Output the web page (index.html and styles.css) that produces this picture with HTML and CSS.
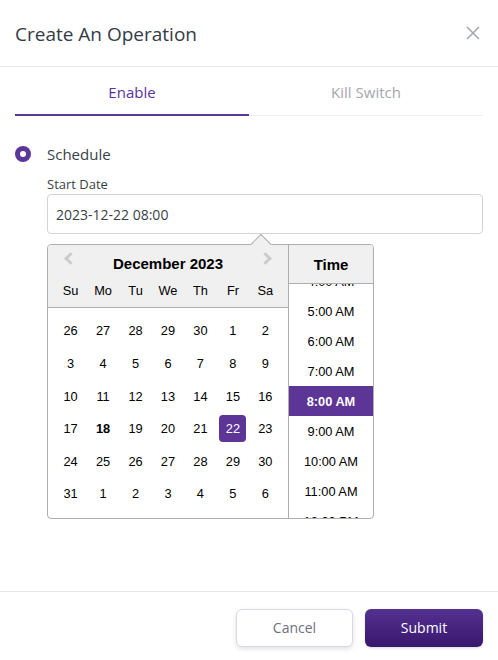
FILE: index.html
```html
<!DOCTYPE html>
<html lang="en">
<head>
<meta charset="utf-8">
<title>Create An Operation</title>
<link rel="stylesheet" href="styles.css">
</head>
<body>
<div class="modal">
  <header class="modal-header">
    <h2 class="modal-title">Create An Operation</h2>
    <button class="close" aria-label="Close">
      <svg width="14" height="14" viewBox="0 0 14 14"><path d="M1 1 L13 13 M13 1 L1 13" stroke="#a3a5b0" stroke-width="1.5" fill="none"/></svg>
    </button>
  </header>
  <main class="modal-body">
    <div class="tabs">
      <div class="tab active">Enable</div>
      <div class="tab">Kill Switch</div>
    </div>
    <div class="option">
      <span class="radio"></span>
      <span class="option-label">Schedule</span>
    </div>
    <div class="field">
      <label class="field-label">Start Date</label>
      <div class="input">2023-12-22 08:00</div>
      <div class="popper">
        <div class="arrow"></div>
        <div class="datepicker">
          <div class="month-box">
            <div class="dp-header">
              <span class="nav prev"></span>
              <div class="current-month">December 2023</div>
              <span class="nav next"></span>
              <div class="day-names">
                <span>Su</span><span>Mo</span><span>Tu</span><span>We</span><span>Th</span><span>Fr</span><span>Sa</span>
              </div>
            </div>
            <div class="month">
              <div class="week"><span>26</span><span>27</span><span>28</span><span>29</span><span>30</span><span>1</span><span>2</span></div>
              <div class="week"><span>3</span><span>4</span><span>5</span><span>6</span><span>7</span><span>8</span><span>9</span></div>
              <div class="week"><span>10</span><span>11</span><span>12</span><span>13</span><span>14</span><span>15</span><span>16</span></div>
              <div class="week"><span>17</span><span class="today">18</span><span>19</span><span>20</span><span>21</span><span class="selected">22</span><span>23</span></div>
              <div class="week"><span>24</span><span>25</span><span>26</span><span>27</span><span>28</span><span>29</span><span>30</span></div>
              <div class="week"><span>31</span><span>1</span><span>2</span><span>3</span><span>4</span><span>5</span><span>6</span></div>
            </div>
          </div>
          <div class="time-box">
            <div class="time-header">Time</div>
            <div class="time-list-wrap">
              <ul class="time-list">
                <li>4:00 AM</li>
                <li>5:00 AM</li>
                <li>6:00 AM</li>
                <li>7:00 AM</li>
                <li class="selected">8:00 AM</li>
                <li>9:00 AM</li>
                <li>10:00 AM</li>
                <li>11:00 AM</li>
                <li>12:00 PM</li>
              </ul>
            </div>
          </div>
        </div>
      </div>
    </div>
  </main>
  <footer class="modal-footer">
    <button class="btn btn-cancel">Cancel</button>
    <button class="btn btn-submit">Submit</button>
  </footer>
</div>
</body>
</html>
```
FILE: styles.css
```css
* { box-sizing: border-box; }
html, body { margin: 0; padding: 0; background: #fff; }
body { font-family: "Open Sans", "Noto Sans", sans-serif; color: #333; }

.modal {
  width: 498px;
  height: 660px;
  display: flex;
  flex-direction: column;
}

.modal-header {
  height: 67px;
  flex: none;
  display: flex;
  align-items: center;
  justify-content: space-between;
  padding: 0 18px 0 15px;
  border-bottom: 1px solid #e6e6e9;
}
.modal-title {
  margin: 0;
  font-size: 19px;
  font-weight: 400;
  color: #343b46;
  padding-top: 1px;
}
.close {
  border: 0;
  background: none;
  padding: 0;
  width: 14px;
  height: 14px;
  display: flex;
  margin-top: -1px;
}

.modal-body {
  flex: 1;
  padding: 0 15px;
}

.tabs {
  display: flex;
  border-bottom: 1px solid #efeff2;
}
.tab {
  flex: 1;
  height: 49px;
  display: flex;
  align-items: center;
  justify-content: center;
  font-size: 15px;
  color: #a6a6b0;
  border-bottom: 2px solid transparent;
  margin-bottom: -1px;
  padding-top: 2px;
}
.tab.active {
  color: #5a33a0;
  border-bottom-color: #5b3497;
}

.option {
  display: flex;
  align-items: center;
  gap: 16px;
  margin-top: 29px;
  height: 18px;
}
.radio {
  width: 16px;
  height: 16px;
  border-radius: 50%;
  background: #5c3699;
  display: flex;
  align-items: center;
  justify-content: center;
}
.radio::after {
  content: "";
  width: 6px;
  height: 6px;
  border-radius: 50%;
  background: #fff;
}
.option-label {
  font-size: 15px;
  color: #3a3f4a;
}

.field {
  position: relative;
  margin-left: 32px;
  margin-top: 12px;
}
.field-label {
  display: block;
  font-size: 13px;
  color: #3a3f4a;
  line-height: 18px;
}
.input {
  margin-top: 1px;
  height: 40px;
  border: 1px solid #d3d3d9;
  border-radius: 4px;
  padding: 0 8px;
  display: flex;
  align-items: center;
  font-size: 14px;
  color: #3a3f4a;
}

/* date picker popover */
.popper {
  position: absolute;
  top: calc(100% + 10px);
  left: 0;
  z-index: 2;
}
.arrow {
  position: absolute;
  left: 206px;
  top: -7px;
  width: 16px;
  height: 16px;
  background: #f0f0f0;
  border-left: 1px solid #aeaeae;
  border-top: 1px solid #aeaeae;
  transform: rotate(45deg);
  z-index: 1;
}
.datepicker {
  position: relative;
  display: flex;
  font-family: "Liberation Sans", Arial, sans-serif;
  font-size: 12.8px;
  color: #000;
  background: #fff;
  border: 1px solid #aeaeae;
  border-radius: 4px;
  overflow: hidden;
}
.month-box {
  width: 240px;
}
.dp-header {
  position: relative;
  background: #f0f0f0;
  border-bottom: 1px solid #aeaeae;
  padding: 9px 0 3px;
  text-align: center;
  z-index: 2;
}
.current-month {
  font-weight: bold;
  font-size: 15px;
  line-height: 20px;
}
.nav {
  position: absolute;
  top: 9px;
  width: 9px;
  height: 9px;
  border-style: solid;
  border-color: #cbcbcb;
  border-width: 3px 3px 0 0;
}
.nav.prev { left: 18px; transform: rotate(-135deg); }
.nav.next { right: 18px; transform: rotate(45deg); }
.day-names {
  display: flex;
  justify-content: center;
  margin-top: 3px;
}
.day-names span,
.week span {
  width: 27.2px;
  margin: 0 2.65px;
  line-height: 27px;
  text-align: center;
}
.month {
  padding: 6.6px 6.4px 7.6px;
}
.week {
  display: flex;
  height: 32.6px;
  align-items: center;
}
.week span {
  border-radius: 4px;
}
.week .today { font-weight: bold; }
.week .selected {
  background: #5c3596;
  color: #fff;
}

.time-box {
  width: 85px;
  border-left: 1px solid #aeaeae;
  display: flex;
  flex-direction: column;
}
.time-header {
  position: relative;
  z-index: 2;
  flex: none;
  height: 39px;
  background: #f0f0f0;
  border-bottom: 1px solid #aeaeae;
  display: flex;
  align-items: center;
  justify-content: center;
  font-weight: bold;
  font-size: 15px;
}
.time-list-wrap {
  flex: 1 1 0;
  height: 0;
  min-height: 0;
  overflow: hidden;
}
.time-list {
  list-style: none;
  margin: -18px 0 0;
  padding: 0;
}
.time-list li {
  height: 30px;
  display: flex;
  align-items: center;
  justify-content: center;
  white-space: nowrap;
  font-size: 12.8px;
}
.time-list li.selected {
  background: #5c3596;
  color: #fff;
  font-weight: bold;
}

.modal-footer {
  flex: none;
  height: 69px;
  border-top: 1px solid #e6e6e9;
  display: flex;
  justify-content: flex-end;
  align-items: center;
  gap: 12px;
  padding: 3px 15px 0;
}
.btn {
  height: 38px;
  border-radius: 6px;
  font-family: "Open Sans", "Noto Sans", sans-serif;
  font-size: 14px;
  cursor: pointer;
}
.btn-cancel {
  width: 117px;
  background: #fff;
  color: #6e6e82;
  border: 1px solid #d9d9e2;
  box-shadow: 0 2px 5px rgba(0,0,0,0.12);
}
.btn-submit {
  width: 118px;
  color: #fff;
  border: 0;
  background: linear-gradient(#53318f, #3a176e);
  box-shadow: 0 1px 3px rgba(0,0,0,0.15);
}
```
